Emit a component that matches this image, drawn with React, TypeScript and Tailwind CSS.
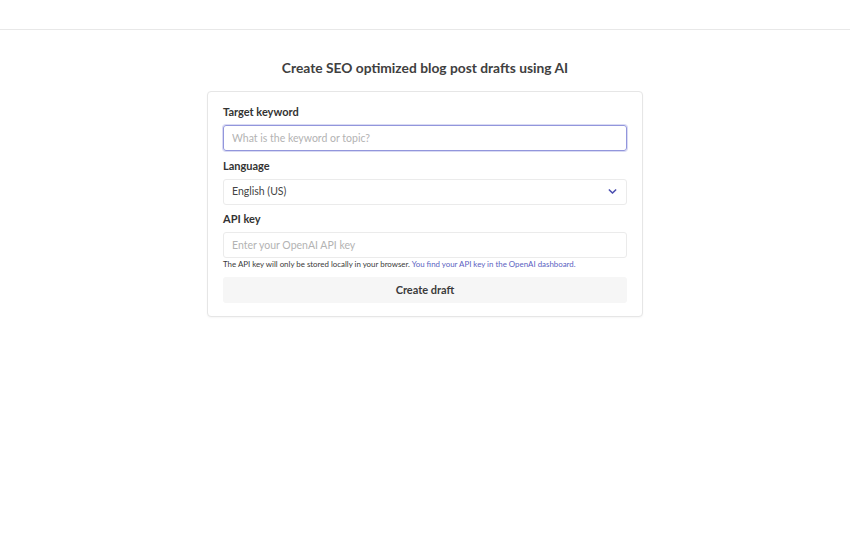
export default function App() {
  return (
    <div className="min-h-screen bg-white font-['Lato',sans-serif] text-[#3b3b3b]">
      <header className="h-[30px] border-b border-[#e8e8e8]" />
      <main className="flex flex-col items-center pt-[28px]">
        <h1 className="text-[13.8px] leading-[20px] font-bold text-[#404040]">
          Create SEO optimized blog post drafts using AI
        </h1>
        <form
          className="mt-[13px] w-[436px] rounded-[4px] border border-[#e6e6e6] bg-white px-[15px] pt-[13px] pb-[13px] shadow-[0_1px_2px_rgba(0,0,0,0.04)]"
          onSubmit={(e) => e.preventDefault()}
        >
          <label className="block text-[11px] leading-[14px] font-bold text-[#333]">Target keyword</label>
          <input
            className="mt-[6px] block h-[26px] w-full rounded-[3px] border border-[#9296dc] px-[8px] text-[10.5px] text-[#333] outline-none shadow-[0_0_0_1px_rgba(146,150,220,0.35)] placeholder:text-[#b3b3b3]"
            placeholder="What is the keyword or topic?"
          />

          <label className="mt-[8px] block text-[11px] leading-[14px] font-bold text-[#333]">Language</label>
          <div className="relative mt-[6px] h-[26px]">
            <div className="flex h-full w-full items-center rounded-[3px] border border-[#ebebeb] px-[8px] text-[10.5px] text-[#444]">
              English (US)
            </div>
            <svg
              className="absolute right-[10px] top-[9px]"
              width="9"
              height="7"
              viewBox="0 0 10 7"
              fill="none"
              stroke="#4b4fb0"
              strokeWidth="1.8"
              strokeLinecap="round"
              strokeLinejoin="round"
            >
              <path d="M1.5 1.8 5 5.2 8.5 1.8" />
            </svg>
          </div>

          <label className="mt-[7px] block text-[11px] leading-[14px] font-bold text-[#333]">API key</label>
          <input
            className="mt-[6px] block h-[26px] w-full rounded-[3px] border border-[#ebebeb] px-[8px] text-[10.5px] text-[#333] outline-none placeholder:text-[#b3b3b3]"
            placeholder="Enter your OpenAI API key"
          />
          <p className="mt-[1px] text-[7.9px] leading-[11px] text-[#3a3a3a]">
            The API key will only be stored locally in your browser.{" "}
            <a href="#" className="text-[#5b5fc2]">
              You find your API key in the OpenAI dashboard.
            </a>
          </p>

          <button
            type="submit"
            className="mt-[7px] block h-[26px] w-full rounded-[3px] bg-[#f6f6f6] text-[11px] font-bold text-[#3b3b3b]"
          >
            Create draft
          </button>
        </form>
      </main>
    </div>
  );
}
